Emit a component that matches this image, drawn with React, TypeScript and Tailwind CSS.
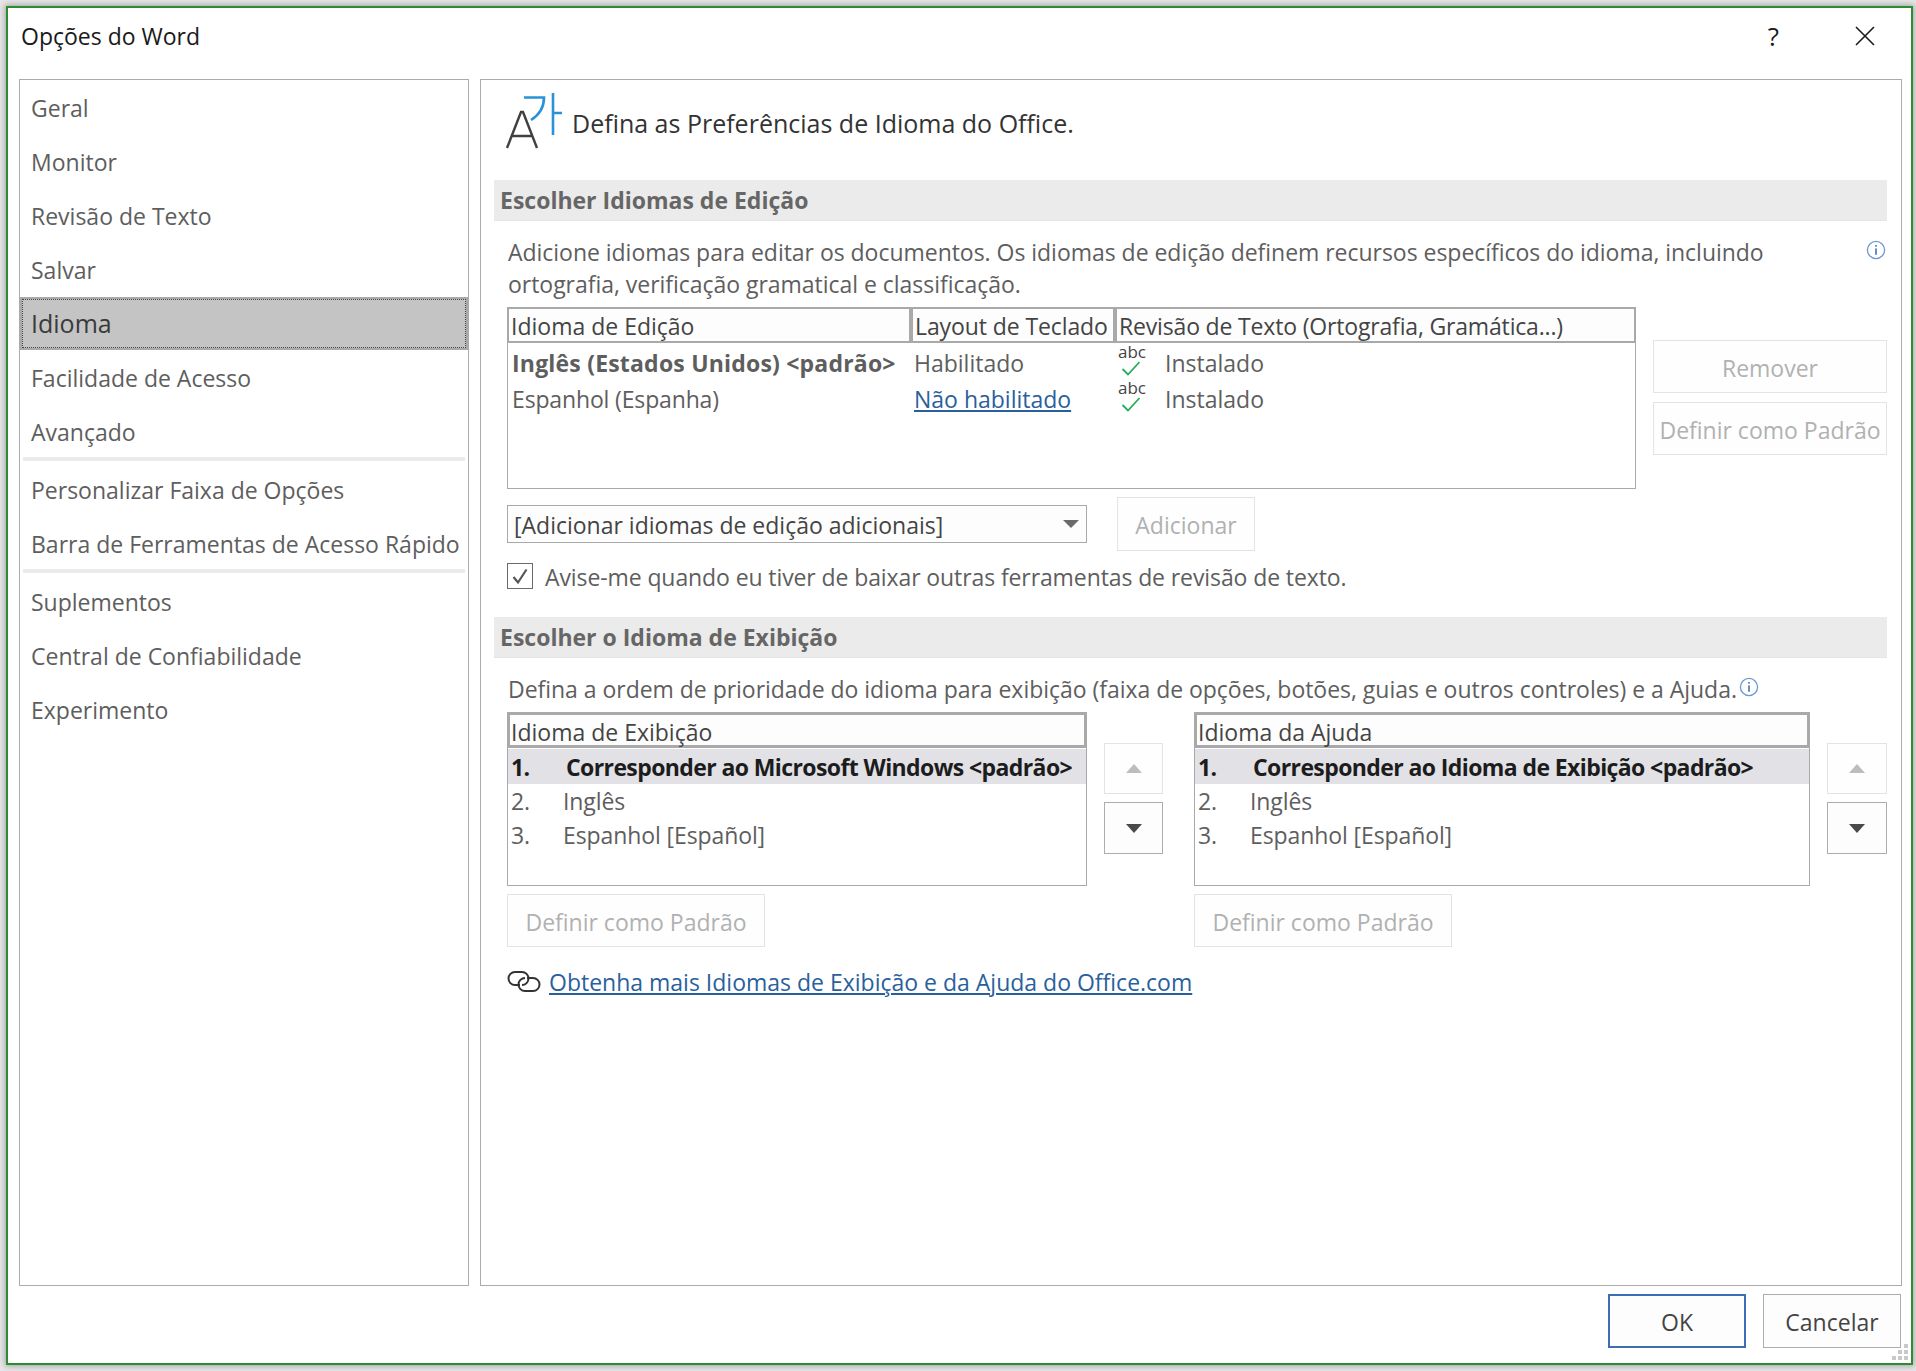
const FONT = 'font-["Open_Sans","Noto_Sans",sans-serif]'

function GhostButton({ label, className = '' }: { label: string; className?: string }) {
  return (
    <div className={`flex items-center justify-center pt-[3px] border border-[#e3e3e3] bg-[#fefefe] text-[#b1b1b1] text-[23px] ${className}`}>
      {label}
    </div>
  )
}

function SectionBar({ title }: { title: string }) {
  return (
    <div className="ml-[13px] mr-[14px] h-[41px] flex items-center pl-[6px] bg-[#ebebeb] border-b border-[#e4e4e4] text-[23px] font-bold text-[#666666]">
      {title}
    </div>
  )
}

function InfoIcon() {
  return (
    <svg width="20" height="20" viewBox="0 0 20 20" className="shrink-0">
      <circle cx="10" cy="10" r="8.6" fill="none" stroke="#6d98d2" strokeWidth="1.3" />
      <rect x="9.2" y="8.4" width="1.6" height="6.4" fill="#3f73b8" />
      <rect x="9.2" y="5" width="1.6" height="1.7" fill="#3f73b8" />
    </svg>
  )
}

function AbcCheck() {
  return (
    <div className="w-[47px] h-[36px] shrink-0">
      <div className="text-[17px] leading-[14px] text-[#444444]">abc</div>
      <svg width="20" height="15" viewBox="0 0 20 15" className="ml-[3px] mt-[2px]">
        <path d="M1.5 8 L7 13.5 L18.5 1" fill="none" stroke="#22ad5c" strokeWidth="1.8" />
      </svg>
    </div>
  )
}

function ArrowButtons({ width }: { width: string }) {
  return (
    <div className={`${width} pt-[31px] ml-[17px] flex flex-col gap-[8px]`}>
      <div className="h-[51px] flex items-center justify-center border border-[#e3e3e3] bg-[#fefefe]">
        <div className="w-0 h-0 border-x-[8px] border-x-transparent border-b-[9px] border-b-[#bdbdbd]" />
      </div>
      <div className="h-[52px] flex items-center justify-center border border-[#adadad] bg-[#fdfdfd]">
        <div className="w-0 h-0 border-x-[8px] border-x-transparent border-t-[9px] border-t-[#4a4a4a]" />
      </div>
    </div>
  )
}

function PriorityList({ header, first, width }: { header: string; first: string; width: string }) {
  return (
    <div className={`${width} h-[174px] border border-[#a9a9a9] bg-white`}>
      <div className="h-[36px] -m-[1px] mb-0 border-[3px] border-[#a9a9a9] bg-[#fdfdfd] pl-[1px] pt-[4px] flex items-center text-[23px] text-[#444444]">
        {header}
      </div>
      <div className="h-[35px] mt-[1px] bg-[#e1e1e6] flex items-center pl-[3px] pt-[2px] text-[23px] font-bold text-[#1c1c1c] tracking-[-0.6px]">
        <span className="w-[55px]">1.</span>
        <span>{first}</span>
      </div>
      {[
        ['2.', 'Inglês'],
        ['3.', 'Espanhol [Español]'],
      ].map(([n, t]) => (
        <div key={n} className="h-[34px] flex items-center pl-[3px] text-[23px] tracking-[-0.1px] text-[#5e5e5e]">
          <span className="w-[52px]">{n}</span>
          <span>{t}</span>
        </div>
      ))}
    </div>
  )
}

const menu = ['Geral', 'Monitor', 'Revisão de Texto', 'Salvar']

function MenuItem({ label }: { label: string }) {
  return <div className="h-[54px] flex items-center pl-[11px] text-[23px] text-[#5e5e5e] whitespace-nowrap">{label}</div>
}

function Separator() {
  return <div className="h-[4px] mx-[3px] -my-[2px] bg-[#ebebeb] relative" />
}

export default function App() {
  return (
    <div className={`w-[1916px] h-[1371px] bg-[#e6e6e6] p-[6px] pr-[3px] ${FONT} overflow-hidden`}>
      <div className="h-[1359px] border-2 border-[#2e8b2e] bg-white flex flex-col relative shadow-[0_0_6px_1px_rgba(0,0,0,0.3)]">
        {/* Title */}
        <div className="h-[71px] shrink-0 flex items-center pl-[13px] pr-[16px] pb-[15px] text-[23px] text-[#1a1a1a]">
          <span className="flex-1">Opções do Word</span>
          <span className="mr-[76px] text-[26px]">?</span>
          <svg width="20" height="20" viewBox="0 0 20 20" className="mr-[20px]">
            <path d="M1 1 L19 19 M19 1 L1 19" stroke="#1a1a1a" strokeWidth="1.6" />
          </svg>
        </div>

        {/* Panels */}
        <div className="h-[1207px] shrink-0 flex pl-[11px] gap-[11px]">
          <div className="w-[450px] border border-[#ababab] pt-[1px]">
            {menu.map(m => <MenuItem key={m} label={m} />)}
            <div className="h-[53px] mb-[1px] border-2 border-[#a9a9a9] bg-[#c4c4c4]">
              <div className="h-full border border-dotted border-[#444444] flex items-center pl-[8px] text-[25px] text-[#3a3a3a]">Idioma</div>
            </div>
            <MenuItem label="Facilidade de Acesso" />
            <MenuItem label="Avançado" />
            <Separator />
            <div className="h-[4px]" />
            <MenuItem label="Personalizar Faixa de Opções" />
            <MenuItem label="Barra de Ferramentas de Acesso Rápido" />
            <Separator />
            <div className="h-[4px]" />
            <MenuItem label="Suplementos" />
            <MenuItem label="Central de Confiabilidade" />
            <MenuItem label="Experimento" />
          </div>

          <div className="w-[1422px] border border-[#ababab] text-[#5e5e5e] text-[23px]">
            {/* Heading */}
            <div className="h-[100px] flex items-start">
              <svg width="64" height="60" viewBox="0 0 64 60" className="ml-[19px] mt-[10px] shrink-0">
                <path d="M7 58 L21 22 L23 22 L37 58 M12 46 L32 46" fill="none" stroke="#404040" strokeWidth="2.4" />
                <path d="M24 7.5 L44 7.5 C44 17 39 25 31 30" fill="none" stroke="#2a92d6" strokeWidth="2.6" />
                <path d="M53 3 L53 45 M53 23 L62 23" fill="none" stroke="#2a92d6" strokeWidth="2.6" />
              </svg>
              <span className="ml-[8px] mt-[27px] text-[25px] leading-[32px] text-[#333333]">Defina as Preferências de Idioma do Office.</span>
            </div>

            <SectionBar title="Escolher Idiomas de Edição" />

            {/* Editing languages */}
            <div className="pl-[26px] pr-[14px]">
              <div className="mt-[15px] flex justify-between leading-[32px] pl-[1px]">
                <p className="tracking-[-0.03px]">
                  Adicione idiomas para editar os documentos. Os idiomas de edição definem recursos específicos do idioma, incluindo
                  <br />
                  ortografia, verificação gramatical e classificação.
                </p>
                <div className="pt-[4px] pr-[1px]"><InfoIcon /></div>
              </div>

              <div className="mt-[7px] flex gap-[17px]">
                <div className="w-[1129px] h-[182px] border border-[#a9a9a9]">
                  <div className="h-[36px] -m-[1px] mb-0 flex text-[#444444]">
                    <div className="w-[404px] border-2 border-[#a9a9a9] bg-[#fdfdfd] pl-[2px] pt-[3px] flex items-center">Idioma de Edição</div>
                    <div className="w-[204px] border-2 border-[#a9a9a9] bg-[#fdfdfd] pl-[2px] pt-[3px] flex items-center whitespace-nowrap tracking-[-0.1px]">Layout de Teclado</div>
                    <div className="flex-1 border-2 border-[#a9a9a9] bg-[#fdfdfd] pl-[2px] pt-[3px] flex items-center tracking-[-0.17px]">Revisão de Texto (Ortografia, Gramática...)</div>
                  </div>
                  <div className="pt-[2px]">
                    <div className="h-[36px] flex items-center">
                      <span className="w-[406px] pl-[4px] font-bold tracking-[0.2px] whitespace-nowrap">Inglês (Estados Unidos) &lt;padrão&gt;</span>
                      <span className="w-[204px]">Habilitado</span>
                      <AbcCheck />
                      <span>Instalado</span>
                    </div>
                    <div className="h-[36px] flex items-center">
                      <span className="w-[406px] pl-[4px] tracking-[-0.15px]">Espanhol (Espanha)</span>
                      <span className="w-[204px] text-[#2a5f9e] underline underline-offset-2">Não habilitado</span>
                      <AbcCheck />
                      <span>Instalado</span>
                    </div>
                  </div>
                </div>
                <div className="w-[234px] pt-[33px] flex flex-col gap-[9px]">
                  <GhostButton label="Remover" className="h-[53px]" />
                  <GhostButton label="Definir como Padrão" className="h-[53px] whitespace-nowrap" />
                </div>
              </div>

              <div className="mt-[8px] flex items-start">
                <div className="mt-[8px] w-[580px] h-[38px] border border-[#a9a9a9] bg-[#fdfdfd] flex items-center justify-between pl-[6px] pr-[7px] pt-[3px] text-[#444444]">
                  <span>[Adicionar idiomas de edição adicionais]</span>
                  <div className="w-0 h-0 border-x-[8px] border-x-transparent border-t-[8px] border-t-[#6a6a6a] -mt-[3px]" />
                </div>
                <GhostButton label="Adicionar" className="ml-[30px] w-[138px] h-[54px]" />
              </div>

              <div className="mt-[12px] h-[26px] flex items-center gap-[12px]">
                <div className="w-[26px] h-[26px] border border-[#6a6a6a] flex items-center justify-center">
                  <svg width="18" height="18" viewBox="0 0 18 18">
                    <path d="M2.5 10 L7 15.5 L15.5 2.5" fill="none" stroke="#555555" strokeWidth="2.2" />
                  </svg>
                </div>
                <span className="pt-[3px] tracking-[-0.1px]">Avise-me quando eu tiver de baixar outras ferramentas de revisão de texto.</span>
              </div>
            </div>

            <div className="mt-[28px]">
              <SectionBar title="Escolher o Idioma de Exibição" />
            </div>

            {/* Display languages */}
            <div className="pl-[26px]">
              <div className="mt-[15px] h-[32px] flex items-center gap-[2px] pl-[1px]">
                <span className="tracking-[-0.03px]">Defina a ordem de prioridade do idioma para exibição (faixa de opções, botões, guias e outros controles) e a Ajuda.</span>
                <div className="-mt-[5px]"><InfoIcon /></div>
              </div>

              <div className="mt-[7px] flex gap-[31px]">
                <div className="w-[656px]">
                  <div className="flex">
                    <PriorityList header="Idioma de Exibição" first="Corresponder ao Microsoft Windows <padrão>" width="w-[580px]" />
                    <ArrowButtons width="w-[59px]" />
                  </div>
                  <GhostButton label="Definir como Padrão" className="mt-[8px] w-[258px] h-[53px]" />
                </div>
                <div className="w-[693px]">
                  <div className="flex">
                    <PriorityList header="Idioma da Ajuda" first="Corresponder ao Idioma de Exibição <padrão>" width="w-[616px]" />
                    <ArrowButtons width="w-[60px]" />
                  </div>
                  <GhostButton label="Definir como Padrão" className="mt-[8px] w-[258px] h-[53px]" />
                </div>
              </div>

              <div className="mt-[19px] h-[32px] flex items-center gap-[8px]">
                <svg width="34" height="24" viewBox="0 0 34 24" className="shrink-0">
                  <path d="M13 15 H8 A6.5 6.5 0 0 1 8 2 H15 A6.5 6.5 0 0 1 15 15" fill="none" stroke="#333333" strokeWidth="2" />
                  <path d="M20 8 H26 A6.5 6.5 0 0 1 26 21 H18 A6.5 6.5 0 0 1 18 8" fill="none" stroke="#333333" strokeWidth="2" />
                </svg>
                <span className="text-[#2a5f9e] underline underline-offset-2">Obtenha mais Idiomas de Exibição e da Ajuda do Office.com</span>
              </div>
            </div>
          </div>
        </div>

        {/* Footer */}
        <div className="flex-1 flex justify-end gap-[17px] pt-[8px] pr-[10px] text-[23px] text-[#444444]">
          <div className="w-[138px] h-[54px] border-2 border-[#3c6eb4] bg-[#fdfdfd] pt-[2px] flex items-center justify-center">OK</div>
          <div className="w-[138px] h-[54px] border border-[#adadad] bg-[#fdfdfd] pt-[2px] flex items-center justify-center">Cancelar</div>
        </div>
        <div className="absolute right-[3px] bottom-[3px] grid grid-cols-3 gap-[2px] w-[16px]">
          {[0, 1, 2, 3, 4, 5, 6, 7, 8].map(i => (
            <div key={i} className={`w-[4px] h-[4px] ${i === 0 || i === 1 || i === 3 ? 'bg-transparent' : 'bg-[#c9c9c9]'}`} />
          ))}
        </div>
      </div>
    </div>
  )
}
